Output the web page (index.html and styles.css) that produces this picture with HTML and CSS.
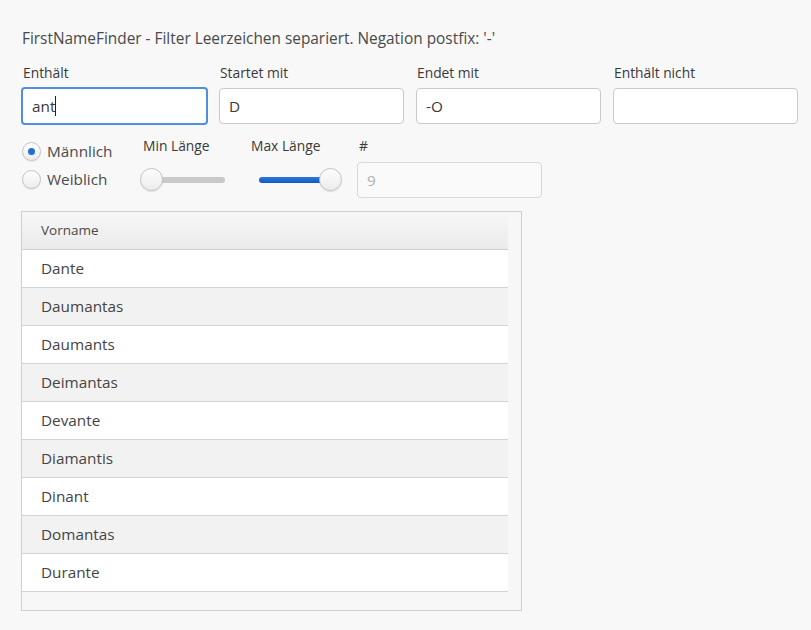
FILE: index.html
```html
<!DOCTYPE html>
<html lang="de">
<head>
<meta charset="utf-8">
<title>FirstNameFinder</title>
<link rel="stylesheet" href="styles.css">
</head>
<body>
<div class="app">
  <div class="title">FirstNameFinder - Filter Leerzeichen separiert. Negation postfix: '-'</div>

  <div class="filters">
    <div class="field">
      <div class="label">Enthält</div>
      <div class="input focused"><span>ant</span><span class="caret"></span></div>
    </div>
    <div class="field">
      <div class="label">Startet mit</div>
      <div class="input"><span>D</span></div>
    </div>
    <div class="field">
      <div class="label">Endet mit</div>
      <div class="input"><span>-O</span></div>
    </div>
    <div class="field">
      <div class="label">Enthält nicht</div>
      <div class="input"></div>
    </div>
  </div>

  <div class="options">
    <div class="radios">
      <div class="radio-row"><span class="radio checked"></span><span>Männlich</span></div>
      <div class="radio-row"><span class="radio"></span><span>Weiblich</span></div>
    </div>
    <div class="slider-col min-col">
      <div class="label">Min Länge</div>
      <div class="slider min"><div class="track"></div><div class="knob"></div></div>
    </div>
    <div class="slider-col max-col">
      <div class="label">Max Länge</div>
      <div class="slider max"><div class="track"></div><div class="knob"></div></div>
    </div>
    <div class="count-col">
      <div class="label">#</div>
      <div class="input disabled"><span>9</span></div>
    </div>
  </div>

  <div class="table">
    <div class="table-inner">
      <div class="thead">Vorname</div>
      <div class="row">Dante</div>
      <div class="row alt">Daumantas</div>
      <div class="row">Daumants</div>
      <div class="row alt">Deimantas</div>
      <div class="row">Devante</div>
      <div class="row alt">Diamantis</div>
      <div class="row">Dinant</div>
      <div class="row alt">Domantas</div>
      <div class="row">Durante</div>
    </div>
  </div>
</div>
</body>
</html>
```

FILE: styles.css
```css
html, body {
  margin: 0;
  padding: 0;
  background: #f8f8f8;
}

body {
  font-family: "Open Sans", "Liberation Sans", sans-serif;
  color: #444;
}

.app {
  padding: 29px 0 0 22px;
}

.title {
  font-size: 15.4px;
  line-height: 20px;
  color: #4a4a4a;
}

.filters {
  display: grid;
  grid-template-columns: repeat(4, 185px);
  column-gap: 12px;
  margin-top: 15px;
}

.label {
  font-size: 13.8px;
  line-height: 18px;
  color: #3a3a3a;
  padding-left: 1px;
}

.field .label {
  margin-bottom: 6px;
}

.input {
  box-sizing: border-box;
  height: 36px;
  border: 1px solid #c9c9c9;
  border-radius: 4px;
  background: #fff;
  font-size: 15.3px;
  line-height: 34px;
  padding-left: 9px;
  color: #3a3a3a;
  display: flex;
  align-items: center;
}

.input.focused {
  border: 2px solid #4d8fe0;
  margin: -1px;
  width: 187px;
  height: 38px;
  padding-left: 9px;
}

.caret {
  display: inline-block;
  width: 1px;
  height: 20px;
  background: #222;
}

.options {
  display: flex;
  margin-top: 13px;
}

.radios {
  display: flex;
  flex-direction: column;
  width: 118px;
}

.radio-row {
  display: flex;
  align-items: center;
  height: 28px;
  font-size: 15.3px;
  color: #4a4a4a;
}

.radio {
  box-sizing: border-box;
  width: 19px;
  height: 19px;
  border-radius: 50%;
  border: 1px solid #c4c4c4;
  background: linear-gradient(#fff, #ececec);
  margin-right: 6px;
  display: flex;
  align-items: center;
  justify-content: center;
  box-shadow: 0 1px 1px rgba(0,0,0,0.08);
}

.radio.checked::after {
  content: "";
  width: 7px;
  height: 7px;
  border-radius: 50%;
  background: #1f6fd6;
}

.slider-col .label {
  margin-bottom: 13px;
}

.min-col {
  width: 110px;
}

.min-col .label {
  margin-left: 2px;
}

.max-col {
  width: 107px;
}

.slider {
  position: relative;
  height: 23px;
}

.slider .track {
  position: absolute;
  top: 9px;
  height: 6px;
  border-radius: 3px;
}

.slider.min {
  width: 85px;
}

.slider.min .track {
  left: 8px;
  right: 0;
  background: #c9c9c9;
}

.slider.min .knob {
  left: 0;
}

.slider.max {
  width: 83px;
  margin-left: 9px;
}

.slider.max .track {
  left: 0;
  right: 8px;
  background: linear-gradient(#2a78df, #1458bd);
}

.slider.max .knob {
  right: 0;
}

.knob {
  position: absolute;
  top: 0;
  box-sizing: border-box;
  width: 23px;
  height: 23px;
  border-radius: 50%;
  border: 1px solid #c2c2c2;
  background: linear-gradient(#fdfdfd, #ececec);
  box-shadow: 0 1px 1px rgba(0,0,0,0.1);
}

.count-col .label {
  margin-left: 1px;
  margin-bottom: 7px;
}

.input.disabled {
  width: 185px;
  background: #fafafa;
  border-color: #d9d9d9;
  color: #b0b0b0;
}

.table {
  box-sizing: border-box;
  width: 501px;
  height: 400px;
  margin-top: 13px;
  margin-left: -1px;
  border: 1px solid #cfcfcf;
  background: #f7f7f7;
}

.table-inner {
  width: 486px;
}

.thead {
  height: 37px;
  line-height: 37px;
  font-size: 13.5px;
  padding-left: 19px;
  color: #4a4a4a;
  background: linear-gradient(#f7f7f7, #ebebeb);
  border-bottom: 1px solid #cfcfcf;
}

.row {
  height: 37px;
  line-height: 37px;
  font-size: 15.3px;
  padding-left: 19px;
  color: #444;
  background: #fff;
  border-bottom: 1px solid #d3d3d3;
}

.row.alt {
  background: #f2f2f2;
}
```
